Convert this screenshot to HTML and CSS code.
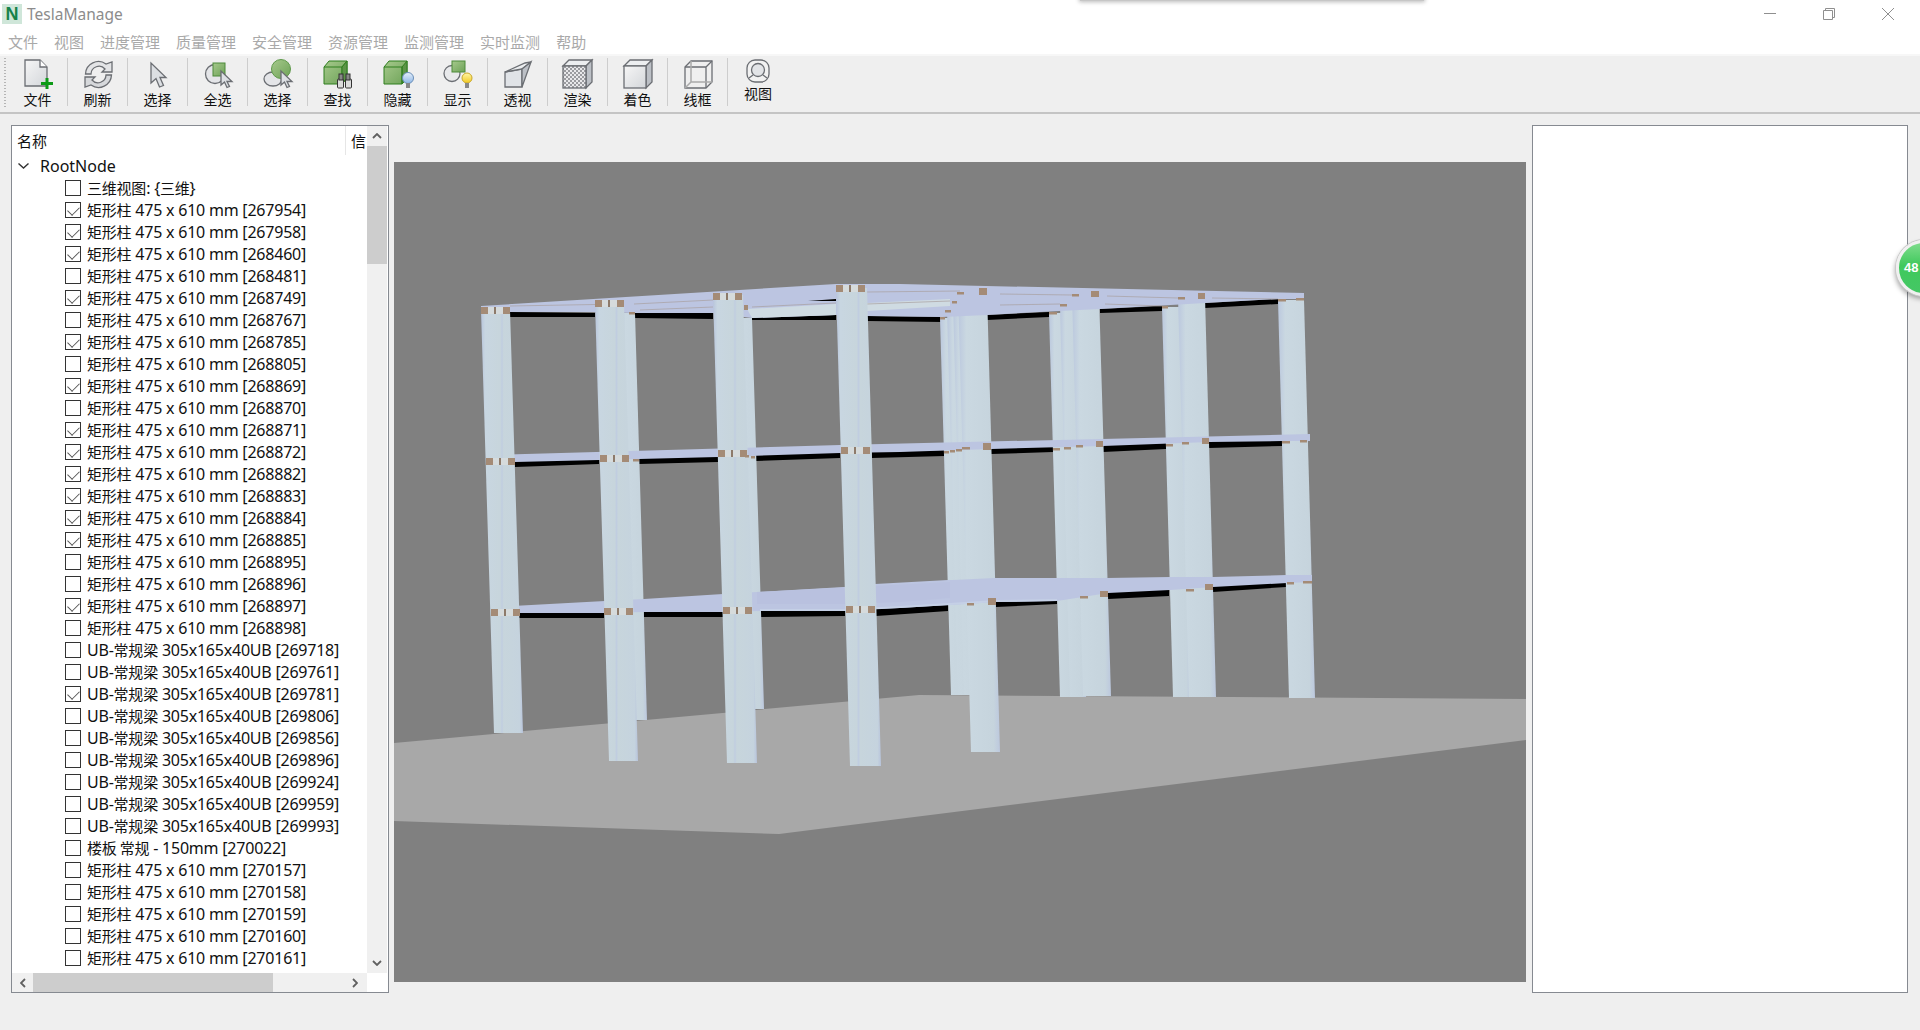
FILE: index.html
```html
<!DOCTYPE html>
<html lang="zh-CN">
<head>
<meta charset="utf-8">
<title>TeslaManage</title>
<link rel="stylesheet" href="styles.css">
</head>
<body>
<div class="popup-shadow"></div>
<div class="app">
  <header class="titlebar">
    <div class="logo">N</div>
    <div class="app-name">TeslaManage</div>
    <div class="win-controls">
      <svg class="win-btn" viewBox="0 0 14 14"><path d="M1 6.5H13" class="win-line"/></svg>
      <svg class="win-btn" viewBox="0 0 14 14"><path d="M1.5 3.5H10.5V12.5H1.5ZM3.5 3.5V1.5H12.5V10.5H10.5" class="win-line"/></svg>
      <svg class="win-btn" viewBox="0 0 14 14"><path d="M1 1L13 13M13 1L1 13" class="win-line"/></svg>
    </div>
  </header>
  <nav class="menubar">
    <span>文件</span><span>视图</span><span>进度管理</span><span>质量管理</span><span>安全管理</span><span>资源管理</span><span>监测管理</span><span>实时监测</span><span>帮助</span>
  </nav>
  <div class="toolbar">
    <div class="grip"></div>
    <div class="tool">
      <svg class="tool-icon" viewBox="0 0 44 32"><defs><linearGradient id="pg" x1="0" y1="0" x2="1" y2="1"><stop offset="0" stop-color="#f6f6f6"/><stop offset="1" stop-color="#d3d6da"/></linearGradient><linearGradient id="gn" x1="0" y1="0" x2="1" y2="1"><stop offset="0" stop-color="#a6c98c"/><stop offset="1" stop-color="#6da257"/></linearGradient><linearGradient id="blb" x1="0" y1="0" x2="0" y2="1"><stop offset="0" stop-color="#e6f0fb"/><stop offset="1" stop-color="#8db6e6"/></linearGradient><linearGradient id="ylb" x1="0" y1="0" x2="0" y2="1"><stop offset="0" stop-color="#fff6a8"/><stop offset="1" stop-color="#f2c920"/></linearGradient><pattern id="chk" width="4" height="4" patternUnits="userSpaceOnUse"><rect width="4" height="4" fill="#e8e8ea"/><rect width="2" height="2" fill="#9a9b9f"/><rect x="2" y="2" width="2" height="2" fill="#9a9b9f"/></pattern></defs>
        <path d="M9 2H24L31 9V28H9Z" fill="url(#pg)" class="ic-s"/><path d="M24 2V9H31" fill="#fff" class="ic-s"/><path d="M29.500 20H32.500V24H37V27H32.500V31H29.500V27H25V24H29.500Z" fill="#0d9a17"/>
      </svg>
      <span>文件</span>
    </div>
    <div class="tool">
      <svg class="tool-icon" viewBox="0 0 44 32"><path d="M9.500 16A13 13 0 0 1 30 6L36 4V14H26L29 11A8 8 0 0 0 15 16Z" fill="#e3e4e6" class="ic-s"/><path d="M35.500 17A13 13 0 0 1 15 27L9 29V19H19L16 22A8 8 0 0 0 30 17Z" fill="#d6d8db" class="ic-s"/></svg>
      <span>刷新</span>
    </div>
    <div class="tool">
      <svg class="tool-icon" viewBox="0 0 44 32"><path d="M15 5V25L20 20.500L23.500 29L27.500 27.500L24 19.500H30Z" fill="#dcdfe3" class="ic-s"/></svg>
      <span>选择</span>
    </div>
    <div class="tool">
      <svg class="tool-icon" viewBox="0 0 44 32"><circle cx="19" cy="16" r="9.500" fill="#e4e5e8" class="ic-s"/><rect x="17" y="5" width="12" height="13" fill="url(#gn)" stroke="#4d8a3a"/><path d="M25 13V27L28.500 24L31 29.500L33.500 28.500L31 23.500H36Z" fill="#dde0e4" class="ic-s"/></svg>
      <span>全选</span>
    </div>
    <div class="tool">
      <svg class="tool-icon" viewBox="0 0 44 32"><ellipse cx="17" cy="21" rx="9" ry="7" fill="#e4e5e8" class="ic-s"/><circle cx="25" cy="11" r="9.500" fill="url(#gn)" stroke="#5f9a4b"/><path d="M25 13V27L28.500 24L31 29.500L33.500 28.500L31 23.500H36Z" fill="#dde0e4" class="ic-s"/></svg>
      <span>选择</span>
    </div>
    <div class="tool">
      <svg class="tool-icon" viewBox="0 0 44 32"><path d="M8 9L13 3H31V20L26 26H8Z" fill="url(#gn)" stroke="#2f7f1e"/><path d="M8 9H26V26M26 9L31 3" fill="none" stroke="#2f7f1e"/><path d="M26 9L31 3V20L26 26Z" fill="#5d9448" stroke="#2f7f1e"/><rect x="21.500" y="21" width="6" height="9" rx="1" fill="#dcdcdc" stroke="#333"/><rect x="29.500" y="21" width="6" height="9" rx="1" fill="#dcdcdc" stroke="#333"/><rect x="23" y="16" width="4" height="6" fill="#888" stroke="#333"/><rect x="30" y="16" width="4" height="6" fill="#888" stroke="#333"/></svg>
      <span>查找</span>
    </div>
    <div class="tool">
      <svg class="tool-icon" viewBox="0 0 44 32"><path d="M8 9L13 3H31V20L26 26H8Z" fill="url(#gn)" stroke="#2f7f1e"/><path d="M26 9L31 3V20L26 26Z" fill="#5d9448" stroke="#2f7f1e"/><path d="M8 9H26V26" fill="none" stroke="#2f7f1e"/><circle cx="32" cy="20" r="5.500" fill="url(#blb)" stroke="#6b8fb8"/><rect x="30" y="25" width="4" height="5" fill="#888"/></svg>
      <span>隐藏</span>
    </div>
    <div class="tool">
      <svg class="tool-icon" viewBox="0 0 44 32"><circle cx="16" cy="15.500" r="8" fill="#e8e9eb" class="ic-s"/><rect x="16" y="3" width="13" height="11" fill="url(#gn)" stroke="#4d8a3a"/><circle cx="31" cy="20" r="5" fill="url(#ylb)" stroke="#c9a72a"/><rect x="29" y="25" width="4" height="5" fill="#888"/></svg>
      <span>显示</span>
    </div>
    <div class="tool">
      <svg class="tool-icon" viewBox="0 0 44 32"><path d="M9 14L26 11V29H9Z" fill="#e0e3e7" class="ic-s"/><path d="M9 14L29 5L35 4L26 11Z" fill="#eceef0" class="ic-s"/><path d="M26 11L35 4L26 29Z" fill="#bcc0c6" class="ic-s"/></svg>
      <span>透视</span>
    </div>
    <div class="tool">
      <svg class="tool-icon" viewBox="0 0 44 32"><path d="M7 8L13 2H36L30 8Z" fill="#eceef0" class="ic-s"/><path d="M30 8L36 2V24L30 30Z" fill="#bcc0c6" class="ic-s"/><rect x="7" y="8" width="23" height="22" fill="url(#chk)" class="ic-s"/></svg>
      <span>渲染</span>
    </div>
    <div class="tool">
      <svg class="tool-icon" viewBox="0 0 44 32"><path d="M8 8L14 2H36L30 8Z" fill="#eceef0" class="ic-s"/><path d="M30 8L36 2V24L30 30Z" fill="#bcc0c6" class="ic-s"/><rect x="8" y="8" width="22" height="22" fill="url(#pg)" class="ic-s"/></svg>
      <span>着色</span>
    </div>
    <div class="tool">
      <svg class="tool-icon" viewBox="0 0 44 32"><path d="M9 9L15 3H36V24L30 30H9Z" fill="none" class="ic-s"/><path d="M9 9H30V30M30 9L36 3" fill="none" class="ic-s"/><path d="M15 3V24H36M15 24L9 30" fill="none" stroke="#aaa" stroke-width="1.500"/></svg>
      <span>线框</span>
    </div>
    <div class="tool tool-last">
      <svg class="tool-icon-small" viewBox="0 0 44 26"><rect x="11" y="2" width="22" height="22" rx="8" fill="#f2f2f2" class="ic-s"/><circle cx="22" cy="12" r="6.500" fill="#e2e4e7" class="ic-s"/><path d="M13 20L17 17M31 20L27 17" fill="none" class="ic-s"/></svg>
      <span>视图</span>
    </div>
  </div>
  <main class="workspace">
    <section class="tree-panel">
      <div class="tree-view">
        <div class="tree-head"><div class="head-name">名称</div><div class="head-info">信</div></div>
        <div class="root-row"><svg class="caret" viewBox="0 0 11 6"><path d="M.5 .5L5.500 5L10.500 .5"/></svg><span class="t">RootNode</span></div>
        <div class="row"><i class="chk"></i><span class="t"><b class="cj">三维视图</b>: {<b class="cj">三维</b>}</span></div>
        <div class="row"><i class="chk on"></i><span class="t"><b class="cj">矩形柱</b> 475 x 610 mm [267954]</span></div>
        <div class="row"><i class="chk on"></i><span class="t"><b class="cj">矩形柱</b> 475 x 610 mm [267958]</span></div>
        <div class="row"><i class="chk on"></i><span class="t"><b class="cj">矩形柱</b> 475 x 610 mm [268460]</span></div>
        <div class="row"><i class="chk"></i><span class="t"><b class="cj">矩形柱</b> 475 x 610 mm [268481]</span></div>
        <div class="row"><i class="chk on"></i><span class="t"><b class="cj">矩形柱</b> 475 x 610 mm [268749]</span></div>
        <div class="row"><i class="chk"></i><span class="t"><b class="cj">矩形柱</b> 475 x 610 mm [268767]</span></div>
        <div class="row"><i class="chk on"></i><span class="t"><b class="cj">矩形柱</b> 475 x 610 mm [268785]</span></div>
        <div class="row"><i class="chk"></i><span class="t"><b class="cj">矩形柱</b> 475 x 610 mm [268805]</span></div>
        <div class="row"><i class="chk on"></i><span class="t"><b class="cj">矩形柱</b> 475 x 610 mm [268869]</span></div>
        <div class="row"><i class="chk"></i><span class="t"><b class="cj">矩形柱</b> 475 x 610 mm [268870]</span></div>
        <div class="row"><i class="chk on"></i><span class="t"><b class="cj">矩形柱</b> 475 x 610 mm [268871]</span></div>
        <div class="row"><i class="chk on"></i><span class="t"><b class="cj">矩形柱</b> 475 x 610 mm [268872]</span></div>
        <div class="row"><i class="chk on"></i><span class="t"><b class="cj">矩形柱</b> 475 x 610 mm [268882]</span></div>
        <div class="row"><i class="chk on"></i><span class="t"><b class="cj">矩形柱</b> 475 x 610 mm [268883]</span></div>
        <div class="row"><i class="chk on"></i><span class="t"><b class="cj">矩形柱</b> 475 x 610 mm [268884]</span></div>
        <div class="row"><i class="chk on"></i><span class="t"><b class="cj">矩形柱</b> 475 x 610 mm [268885]</span></div>
        <div class="row"><i class="chk"></i><span class="t"><b class="cj">矩形柱</b> 475 x 610 mm [268895]</span></div>
        <div class="row"><i class="chk"></i><span class="t"><b class="cj">矩形柱</b> 475 x 610 mm [268896]</span></div>
        <div class="row"><i class="chk on"></i><span class="t"><b class="cj">矩形柱</b> 475 x 610 mm [268897]</span></div>
        <div class="row"><i class="chk"></i><span class="t"><b class="cj">矩形柱</b> 475 x 610 mm [268898]</span></div>
        <div class="row"><i class="chk"></i><span class="t">UB-<b class="cj">常规梁</b> 305x165x40UB [269718]</span></div>
        <div class="row"><i class="chk"></i><span class="t">UB-<b class="cj">常规梁</b> 305x165x40UB [269761]</span></div>
        <div class="row"><i class="chk on"></i><span class="t">UB-<b class="cj">常规梁</b> 305x165x40UB [269781]</span></div>
        <div class="row"><i class="chk"></i><span class="t">UB-<b class="cj">常规梁</b> 305x165x40UB [269806]</span></div>
        <div class="row"><i class="chk"></i><span class="t">UB-<b class="cj">常规梁</b> 305x165x40UB [269856]</span></div>
        <div class="row"><i class="chk"></i><span class="t">UB-<b class="cj">常规梁</b> 305x165x40UB [269896]</span></div>
        <div class="row"><i class="chk"></i><span class="t">UB-<b class="cj">常规梁</b> 305x165x40UB [269924]</span></div>
        <div class="row"><i class="chk"></i><span class="t">UB-<b class="cj">常规梁</b> 305x165x40UB [269959]</span></div>
        <div class="row"><i class="chk"></i><span class="t">UB-<b class="cj">常规梁</b> 305x165x40UB [269993]</span></div>
        <div class="row"><i class="chk"></i><span class="t"><b class="cj">楼板 常规</b> - 150mm [270022]</span></div>
        <div class="row"><i class="chk"></i><span class="t"><b class="cj">矩形柱</b> 475 x 610 mm [270157]</span></div>
        <div class="row"><i class="chk"></i><span class="t"><b class="cj">矩形柱</b> 475 x 610 mm [270158]</span></div>
        <div class="row"><i class="chk"></i><span class="t"><b class="cj">矩形柱</b> 475 x 610 mm [270159]</span></div>
        <div class="row"><i class="chk"></i><span class="t"><b class="cj">矩形柱</b> 475 x 610 mm [270160]</span></div>
        <div class="row"><i class="chk"></i><span class="t"><b class="cj">矩形柱</b> 475 x 610 mm [270161]</span></div>
      </div>
      <div class="vscroll">
        <div class="sb-btn"><svg class="sb-arrow" viewBox="0 0 10 6"><path d="M1 5L5 1L9 5"/></svg></div>
        <div class="vthumb"></div>
        <div class="sb-fill"></div>
        <div class="sb-btn"><svg class="sb-arrow" viewBox="0 0 10 6"><path d="M1 1L5 5L9 1"/></svg></div>
      </div>
      <div class="hscroll">
        <div class="sb-btn-h"><svg class="sb-arrow-h" viewBox="0 0 6 10"><path d="M5 1L1 5L5 9"/></svg></div>
        <div class="hthumb"></div>
        <div class="sb-fill"></div>
        <div class="sb-btn-h sb-btn-end"><svg class="sb-arrow-h" viewBox="0 0 6 10"><path d="M1 1L5 5L1 9"/></svg></div>
      </div>
      <div class="sb-corner"></div>
    </section>
    <section class="viewport">
      <svg class="scene" viewBox="394 162 1132 820">
        <defs>
          <linearGradient id="cg" x1="0" y1="0" x2="1" y2="0"><stop offset="0" stop-color="#b8c5dc"/><stop offset=".1" stop-color="#c8d6e1"/><stop offset=".46" stop-color="#c7d5dc"/><stop offset=".5" stop-color="#c0cde0"/><stop offset=".54" stop-color="#c7d5dc"/><stop offset=".92" stop-color="#c5d3de"/><stop offset="1" stop-color="#b8c4dc"/></linearGradient>
          <linearGradient id="cs" x1="0" y1="0" x2="1" y2="0"><stop offset="0" stop-color="#bbc8de"/><stop offset=".2" stop-color="#cad8e1"/><stop offset=".85" stop-color="#c6d4dd"/><stop offset="1" stop-color="#bcc8de"/></linearGradient>
          <g id="jn"><rect x="0" y="0" width="29" height="7" fill="#d6dbdc"/><rect x="0" y="0" width="7" height="7" fill="#a48b76"/><rect x="13" y="0" width="2" height="7" fill="#8d7a6a"/><rect x="22" y="0" width="7" height="7" fill="#a48b76"/></g>
        </defs>
        <polygon class="ground" points="394,743 919,695 1526,699 1526,740 779,834 394,821"/>

        <polygon class="blk" points="510,312 595,313 595,317 510,317"/>
        <polygon class="blk" points="634,313 713,313 713,319 634,318"/>
        <polygon class="blk" points="752,317 836,315 836,320 752,320"/>
        <polygon class="blk" points="867,316 942,317 942,322 867,321"/>
        <polygon class="blk" points="987,315 1049,312 1049,317 987,320"/>
        <polygon class="blk" points="1100,309 1162,306 1162,311 1100,313"/>
        <polygon class="blk" points="1205,303 1278,299 1278,304 1205,308"/>

        <polygon class="blk" points="515,461 599,459 599,464 515,467"/>
        <polygon class="blk" points="639,458 718,456 718,462 639,464"/>
        <polygon class="blk" points="756,455 840,452 840,458 756,461"/>
        <polygon class="blk" points="872,452 945,450 945,456 872,458"/>
        <polygon class="blk" points="991,448 1053,446 1053,452 991,454"/>
        <polygon class="blk" points="1103,445 1166,443 1166,449 1103,452"/>
        <polygon class="blk" points="1209,441 1282,439 1282,446 1209,448"/>

        <polygon class="blk" points="519,612 604,612 604,618 519,618"/>
        <polygon class="blk" points="644,611 723,611 723,617 644,617"/>
        <polygon class="blk" points="760,610 845,610 845,616 760,617"/>
        <polygon class="blk" points="876,608 948,604 948,611 876,616"/>
        <polygon class="blk" points="996,601 1057,600 1057,604 996,607"/>
        <polygon class="blk" points="1108,592 1169,589 1169,596 1108,599"/>
        <polygon class="blk" points="1213,586 1286,582 1286,587 1213,592"/>

        <polygon fill="url(#cs)" points="620,313 635,313 647,720 632,720"/>
        <polygon fill="url(#cs)" points="735,318 752,318 764,709 747,709"/>
        <polygon fill="url(#cs)" points="940,318 960,318 971,695 951,695"/>
        <polygon fill="url(#cs)" points="947,310 965,310 976,695 958,695"/>
        <polygon fill="url(#cs)" points="953,302 972,302 983,695 964,695"/>
        <polygon fill="url(#cs)" points="958,292 987,292 1000,752 971,752"/>
        <polygon fill="url(#cs)" points="1049,313 1068,313 1076,697 1060,697"/>
        <polygon fill="url(#cs)" points="1060,305 1078,305 1086,697 1070,697"/>
        <polygon fill="url(#cs)" points="1072,294 1099,294 1111,696 1083,696"/>
        <polygon fill="url(#cs)" points="1162,307 1182,307 1191,697 1173,697"/>
        <polygon fill="url(#cs)" points="1178,297 1205,297 1216,697 1189,697"/>
        <polygon fill="url(#cs)" points="1278,300 1304,300 1315,698 1289,698"/>

        <polygon class="slab" points="481,306 836,284 900,284 1304,293 1304,299 1278,299 1205,303 1162,305.500 1100,309 1049,311.500 987,315 942,317 867,316 836,315 752,318 713,313 634,313 595,312 510,312 481,312"/>
        <polygon class="roof-hi" points="747,309 836,304 836,315 752,318"/>
        <polygon class="roof-hi" points="867,303 950,299 950,306 867,311"/>
        <polygon class="blk" points="808,301 836,299 836,301"/>
        <path class="roof-line" d="M510 306L595 304.500M634 304L713 300M752 307L836 303M640 310L713 307M867 292L960 291M1000 294L1072 295M1107 296L1178 298M1212 298L1278 299M867 304L950 301M1000 305L1060 304M1105 304L1162 306"/>

        <polygon class="slab" points="486,455 840,445 1310,434 1310,441 1282,441 1209,442 1103,446 991,449 900,452 840,453 718,457 599,460 515,462 486,462"/>

        <polygon class="slab" points="495,607 605,601 644,599 723,594 757,592 844,587 875,584 948,580 953,580 995,578 1057,578 1107,578 1170,577 1213,577 1287,575 1312,575 1312,582 1287,583 1213,587 1170,590 1108,593 1057,601 996,602 950,605 900,608 876,609 844,611 760,611 723,612 644,612 605,613 495,613"/>
        <polygon class="slab-hi" points="757,592 950,582 950,598 900,602 844,604 757,604"/>
        <polyline class="slab-edge" points="760,610 844,610 900,607 950,604 996,601 1057,600"/>

        <polygon fill="url(#cg)" points="481,310 510,310 523,733 494,733"/>
        <polygon fill="url(#cg)" points="595,303 624,303 638,761 609,761"/>
        <polygon fill="url(#cg)" points="713,295 743,295 757,763 727,763"/>
        <polygon fill="url(#cg)" points="836,288 867,288 881,766 850,766"/>

        <g class="joints">
        <use href="#jn" x="481" y="307"/>
        <use href="#jn" x="486" y="458"/>
        <use href="#jn" x="491" y="609"/>
        <use href="#jn" x="595" y="300"/>
        <use href="#jn" x="600" y="455"/>
        <use href="#jn" x="604" y="608"/>
        <use href="#jn" x="713" y="293"/>
        <use href="#jn" x="718" y="450"/>
        <use href="#jn" x="723" y="607"/>
        <use href="#jn" x="836" y="285"/>
        <use href="#jn" x="841" y="447"/>
        <use href="#jn" x="846" y="606"/>

        <rect class="tan" x="979" y="288" width="8" height="7"/><rect class="tan-s" x="957" y="292" width="7" height="2.500"/>
        <rect class="tan" x="983" y="443" width="8" height="7"/><rect class="tan-s" x="962" y="447" width="8" height="2.500"/>
        <rect class="tan" x="988" y="598" width="8" height="7"/><rect class="tan-s" x="967" y="603" width="7" height="2.500"/>
        <rect class="tan" x="1091" y="291" width="8" height="6"/><rect class="tan-s" x="1072" y="294" width="7" height="2.500"/>
        <rect class="tan" x="1096" y="441" width="7" height="6"/><rect class="tan-s" x="1076" y="445" width="7" height="2.500"/>
        <rect class="tan" x="1100" y="591" width="8" height="6"/><rect class="tan-s" x="1080" y="596" width="8" height="2.500"/>
        <rect class="tan" x="1198" y="293" width="7" height="6"/><rect class="tan-s" x="1178" y="297" width="7" height="2.500"/>
        <rect class="tan" x="1202" y="438" width="7" height="6"/><rect class="tan-s" x="1182" y="442" width="7" height="2.500"/>
        <rect class="tan" x="1205" y="584" width="8" height="6"/><rect class="tan-s" x="1186" y="589" width="8" height="2.500"/>
        <rect class="tan-s" x="1278" y="299" width="8" height="2.500"/><rect class="tan-s" x="1296" y="298" width="8" height="2.500"/>
        <rect class="tan-s" x="1282" y="441" width="8" height="2.500"/><rect class="tan-s" x="1300" y="440" width="7" height="2.500"/>
        <rect class="tan-s" x="1287" y="582" width="7" height="2.500"/><rect class="tan-s" x="1303" y="581" width="9" height="2.500"/>
        <rect class="tan-s" x="940" y="317" width="5" height="2.500"/><rect class="tan-s" x="945" y="310" width="6" height="2.500"/><rect class="tan-s" x="952" y="301" width="5" height="2.500"/>
        <rect class="tan-s" x="1049" y="312" width="8" height="2.500"/><rect class="tan-s" x="1060" y="304" width="7" height="2.500"/><rect class="tan-s" x="1162" y="306" width="6" height="2.500"/>
        <rect class="tan-s" x="944" y="451" width="5" height="2.500"/><rect class="tan-s" x="950" y="450" width="5" height="2.500"/><rect class="tan-s" x="956" y="449" width="6" height="2.500"/>
        <rect class="tan-s" x="1053" y="448" width="7" height="2.500"/><rect class="tan-s" x="1064" y="447" width="7" height="2.500"/><rect class="tan-s" x="1166" y="444" width="7" height="2.500"/>
        <rect class="tan-s" x="629" y="312" width="6" height="2.500"/><rect class="tan-s" x="633" y="459" width="6" height="2.500"/><rect class="tan-s" x="745" y="455" width="4" height="2.500"/><rect class="tan-s" x="751" y="456" width="4" height="2.500"/><rect class="tan" x="744" y="305" width="4" height="5"/>
        </g>
      </svg>
    </section>
    <section class="side-panel"></section>
  </main>
</div>
<div class="badge"><span>48</span></div>
</body>
</html>
```
FILE: styles.css
```css
* { box-sizing: border-box; }
html, body { margin: 0; padding: 0; height: 100%; overflow: hidden; }
body { background: #efefef; font-family: "Noto Sans", "Noto Sans CJK SC", sans-serif; color: #111; position: relative; }
.app { display: flex; flex-direction: column; height: 1030px; }

.popup-shadow { position: absolute; left: 1080px; top: -6px; width: 344px; height: 7px; background: #c6c6c6; box-shadow: 0 0 4px 1px rgba(0,0,0,.28); }

.titlebar { height: 30px; background: #fff; display: flex; align-items: center; padding-left: 2px; }
.logo { width: 20px; height: 20px; margin-top: -2px; background: #cfe6d9; color: #16824a; font: 700 18px/20px "Liberation Sans", sans-serif; text-align: center; }
.app-name { margin-left: 5px; margin-top: -3px; font-size: 15.500px; color: #8c8c8c; }
.win-controls { margin-left: auto; display: flex; gap: 45px; padding-right: 25px; margin-top: -2px; }
.win-btn { width: 14px; height: 14px; }
.win-line { fill: none; stroke: #8f8f8f; stroke-width: 1; }

.menubar { height: 24px; background: #fff; display: flex; align-items: center; gap: 16px; padding: 0 0 2px 8px; font-size: 15px; color: #a9a9a9; }

.toolbar { height: 60px; background: #efefef; border-top: 2px solid #f7f7f7; border-bottom: 2px solid #c4c4c4; display: flex; padding-left: 8px; position: relative; }
.grip { position: absolute; left: 4px; top: 2px; width: 2px; height: 50px; background: repeating-linear-gradient(to bottom, #b5b5b5 0 1px, transparent 1px 3px); }
.tool { width: 60px; height: 48px; margin-top: 2px; border-right: 1px solid #cdcdcd; display: flex; flex-direction: column; align-items: center; font-family: "Noto Sans CJK SC", sans-serif; font-size: 14px; line-height: 16px; color: #111; }
.tool span { margin-top: 1px; }
.tool-icon { width: 44px; height: 32px; flex: none; }
.tool-icon-small { width: 44px; height: 26px; flex: none; }
.tool-last { border-right: 0; }
.ic-s { stroke: #6b6e73; stroke-width: 1.3; }

.workspace { flex: 1; display: grid; grid-template-columns: 378px 1132px 377px; grid-template-rows: 868px; column-gap: 5px; padding: 11px 0 0 11px; }

.tree-panel { background: #fff; border: 1px solid #868a91; display: grid; grid-template-columns: 355px 20px; grid-template-rows: 847px 19px; }
.tree-view { overflow: hidden; font-size: 16px; color: #111; }
.tree-head { height: 29px; display: flex; overflow: hidden; }
.head-name { flex: none; width: 334px; padding-left: 5px; line-height: 29px; border-right: 1px solid #e6e6e6; font-family: "Noto Sans CJK SC", sans-serif; font-size: 15px; }
.head-info { flex: none; padding-left: 5px; line-height: 30px; white-space: nowrap; font-family: "Noto Sans CJK SC", sans-serif; font-size: 15px; }
.root-row { height: 22px; display: flex; align-items: center; padding-left: 6px; }
.root-row .t { margin-left: 11px; }
.t { margin-top: -1px; }
.row .t { letter-spacing: -.22px; }
.cj { font-family: "Noto Sans CJK SC", sans-serif; font-weight: 400; font-size: 15px; }
.caret { width: 11px; height: 6px; fill: none; stroke: #333; stroke-width: 1.4; }
.row { height: 22px; display: flex; align-items: center; padding-left: 53px; white-space: nowrap; }
.chk { width: 16px; height: 16px; flex: none; border: 1px solid #333; margin-right: 6px; position: relative; background: #fff; }
.chk.on::after { content: ""; position: absolute; left: 4px; top: 1px; width: 6px; height: 10px; border-right: 1px solid #555; border-bottom: 1px solid #555; transform: rotate(45deg); }

.vscroll { background: #f0f0f0; display: flex; flex-direction: column; }
.hscroll { background: #f0f0f0; display: flex; }
.sb-btn { height: 20px; display: flex; align-items: center; justify-content: center; }
.sb-btn-h { width: 21px; display: flex; align-items: center; justify-content: center; }
.sb-btn-end { padding-right: 4px; }
.sb-arrow { width: 10px; height: 6px; fill: none; stroke: #606060; stroke-width: 1.8; }
.sb-arrow-h { width: 6px; height: 10px; fill: none; stroke: #606060; stroke-width: 1.8; }
.vthumb { height: 118px; background: #cdcdcd; }
.hthumb { width: 240px; background: #cdcdcd; }
.sb-fill { flex: 1; }
.sb-corner { background: #fff; }

.viewport { margin-top: 37px; height: 820px; background: #808080; }
.scene { display: block; width: 1132px; height: 820px; }
.ground { fill: #a8a8a8; }
.blk { fill: #000; }
.slab { fill: #bcc5e1; }
.slab-hi { fill: #b9c1df; }
.slab-edge { fill: none; stroke: #c5d0e6; stroke-width: 2; }
.roof-hi { fill: #cfdbe2; }
.roof-line { fill: none; stroke: #a89f9f; stroke-width: 1; opacity: .7; }
.joints { filter: blur(.6px); }
.tan { fill: #a48b76; }
.tan-s { fill: #a48b76; }

.side-panel { background: #fff; border: 1px solid #868a91; margin-left: 1px; }

.badge { position: absolute; left: 1896px; top: 240px; width: 56px; height: 56px; border-radius: 50%; background: linear-gradient(#7fdc8c, #3fc95c 45%, #45c765); border: 3px solid #f0f0f0; box-shadow: 0 0 0 1px #c9c9c9, -1px 3px 5px rgba(0,0,0,.35); color: #fff; font: 700 13px/50px "Liberation Sans", sans-serif; padding-left: 5px; }
```
